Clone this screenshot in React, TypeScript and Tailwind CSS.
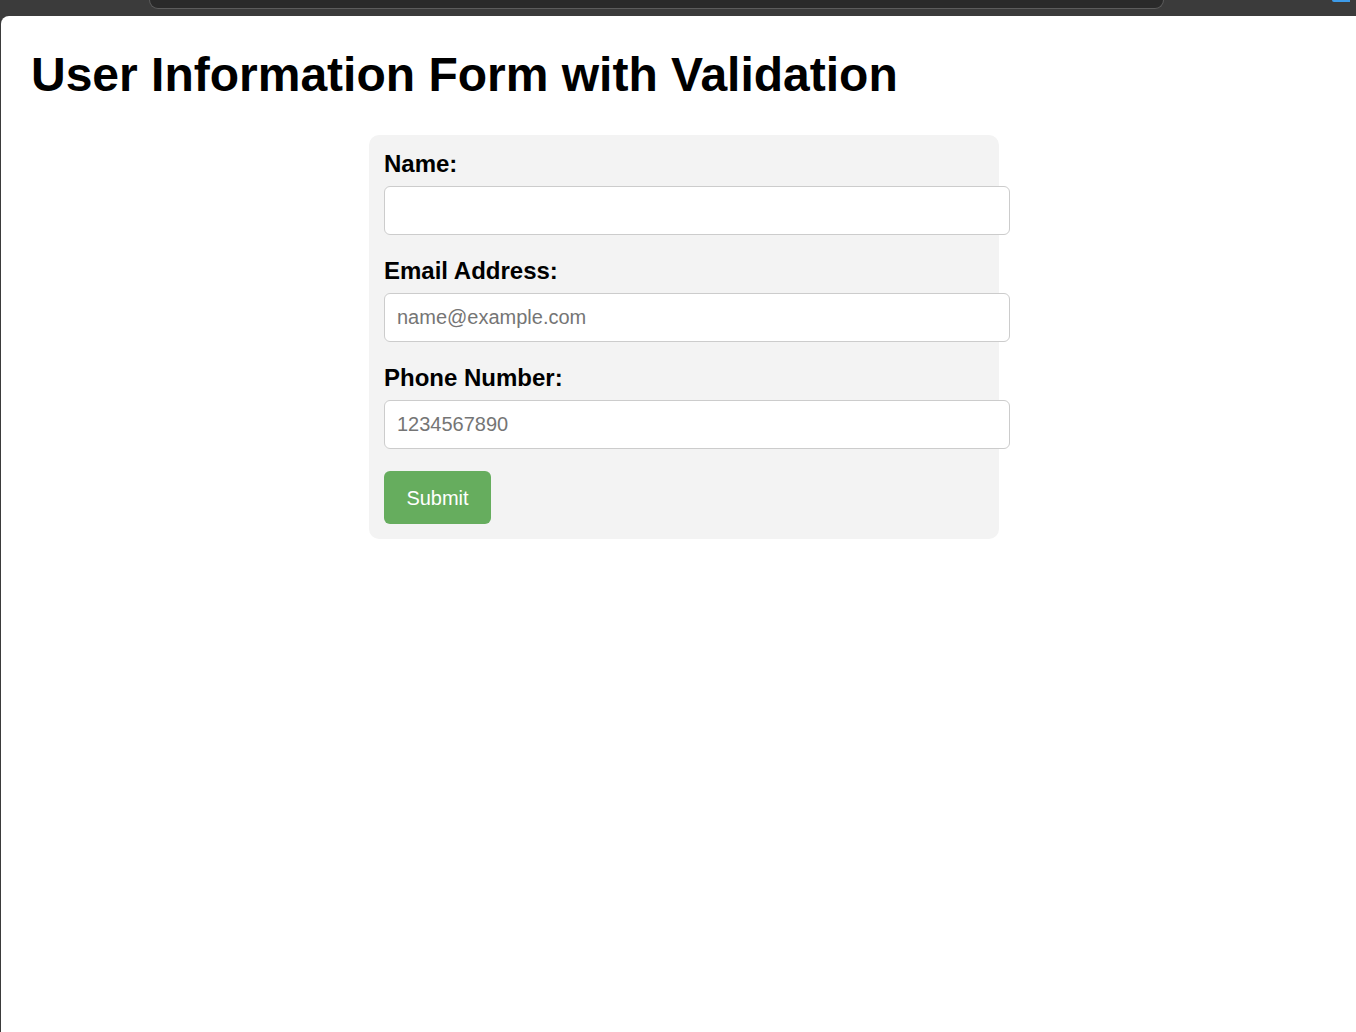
import React, { useState } from 'react';

const font = { fontFamily: '"Liberation Sans", Arial, sans-serif' };

interface IField {
	id: string;
	label: string;
	type: string;
	placeholder: string;
}

const fields: IField[] = [
	{ id: 'name', label: 'Name:', type: 'text', placeholder: '' },
	{ id: 'email', label: 'Email Address:', type: 'email', placeholder: 'name@example.com' },
	{ id: 'phone', label: 'Phone Number:', type: 'tel', placeholder: '1234567890' },
];

const App = () => {
	const [values, setValues] = useState<Record<string, string>>({});

	return (
		<div className="h-[1032px] w-[1356px] flex flex-col bg-[#3b3b3b] overflow-hidden" style={font}>
			{/* browser chrome strip */}
			<div className="h-[16px] shrink-0 flex items-start">
				<div className="ml-[149px] w-[1015px] h-[9px] bg-[#2a2a2a] border-b border-x border-[#5c5c5c] rounded-b-[16px]" />
				<div className="ml-auto mr-[6px] w-[18px] h-[2px] bg-[#3d9be9] rounded-bl-[3px]" />
			</div>

			<div className="flex-1 ml-[1px] bg-white rounded-tl-[8px] pt-[35px]">
				<h1 className="ml-[30px] text-[48px] leading-[48px] font-bold text-black">
					User Information Form with Validation
				</h1>

				<form
					className="mt-[36px] ml-[368px] w-[630px] bg-[#f3f3f3] rounded-[10px] p-[15px]"
					onSubmit={e => e.preventDefault()}
				>
					{fields.map(f => (
						<div key={f.id} className="mb-[22px]">
							<label htmlFor={f.id} className="block text-[24px] leading-[27px] font-bold text-black mb-[9px]">
								{f.label}
							</label>
							<input
								id={f.id}
								type={f.type}
								value={values[f.id] || ''}
								onChange={e => setValues({ ...values, [f.id]: e.target.value })}
								placeholder={f.placeholder}
								className="block w-[626px] h-[49px] px-[12px] bg-white border border-[#cccccc] rounded-[6px] text-[20px] text-black placeholder:text-[#757575] outline-none"
							/>
						</div>
					))}
					<button
						type="submit"
						className="block h-[53px] w-[107px] bg-[#66ad5e] text-white text-[20px] rounded-[6px]"
					>
						Submit
					</button>
				</form>
			</div>
		</div>
	);
};

export default App;
